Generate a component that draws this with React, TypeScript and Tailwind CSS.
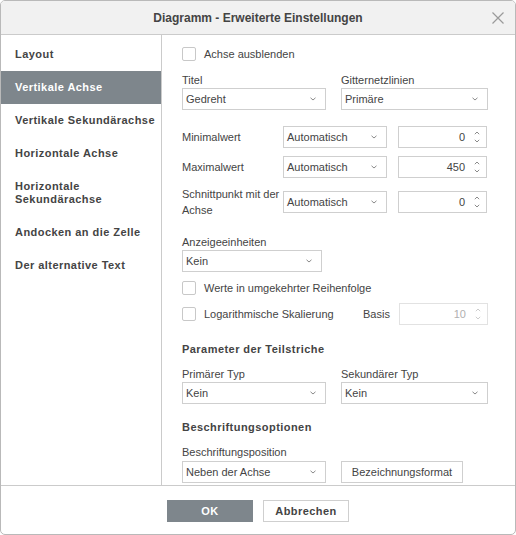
import React from "react";

const font = { fontFamily: '"Liberation Sans", Arial, sans-serif' };

function Chevron() {
  return (
    <svg width="6" height="4" viewBox="0 0 6 4" className="shrink-0">
      <path d="M0.5 0.8 L3 3 L5.5 0.8" fill="none" stroke="#8a8a8a" strokeWidth="1" />
    </svg>
  );
}

function Select({ value, w }: { value: string; w: string }) {
  return (
    <div
      className={`${w} h-[22px] shrink-0 border border-[#cfcfcf] bg-white flex items-center justify-between pl-[3px] pr-[9px] text-[11px] text-[#444]`}
    >
      <span>{value}</span>
      <Chevron />
    </div>
  );
}

function Spin({ value, disabled }: { value: string; disabled?: boolean }) {
  const c = disabled ? "#cccccc" : "#8a8a8a";
  return (
    <div
      className={`w-[89px] h-[22px] shrink-0 border bg-white flex items-center justify-end pr-[6px] text-[11px] ${
        disabled ? "border-[#e2e2e2] text-[#b0b0b0]" : "border-[#cfcfcf] text-[#444]"
      }`}
    >
      <span className="mr-[9px]">{value}</span>
      <svg width="6" height="14" viewBox="0 0 6 14">
        <path d="M0.8 4.2 L3 2 L5.2 4.2" fill="none" stroke={c} strokeWidth="1" />
        <path d="M0.8 9.8 L3 12 L5.2 9.8" fill="none" stroke={c} strokeWidth="1" />
      </svg>
    </div>
  );
}

function Checkbox({ label }: { label: string }) {
  return (
    <div className="flex items-center">
      <div className="w-[14px] h-[14px] border border-[#c8c8c8] rounded-[2px] bg-white shrink-0" />
      <span className="ml-[8px] text-[11px] text-[#444]">{label}</span>
    </div>
  );
}

const navItems = [
  "Layout",
  "Vertikale Achse",
  "Vertikale Sekundärachse",
  "Horizontale Achse",
  "Horizontale Sekundärachse",
  "Andocken an die Zelle",
  "Der alternative Text",
];

export default function App() {
  return (
    <div style={font} className="w-[516px] h-[535px] bg-white">
      <div className="w-[516px] h-[535px] border border-[#b9b9b9] rounded-[5px] overflow-hidden flex flex-col">
        {/* header */}
        <div className="h-[34px] shrink-0 bg-[#f1f1f1] border-b border-[#cbcbcb] relative flex items-center justify-center">
          <span className="text-[12px] font-bold text-[#444]">Diagramm - Erweiterte Einstellungen</span>
          <svg width="12" height="12" viewBox="0 0 12 12" className="absolute right-[11px] top-[11px]">
            <path d="M0.5 0.5 L11.5 11.5 M11.5 0.5 L0.5 11.5" stroke="#9a9a9a" strokeWidth="1.2" />
          </svg>
        </div>

        {/* body */}
        <div className="flex h-[450px] shrink-0">
          <div className="w-[161px] shrink-0 border-r border-[#cbcbcb] pt-[3px]">
            {navItems.map((item) => {
              const active = item === "Vertikale Achse";
              const twoLine = item === "Horizontale Sekundärachse";
              return (
                <div
                  key={item}
                  className={`pl-[14px] pr-[2px] py-[10px] text-[11px] leading-[13px] font-bold tracking-[0.45px] ${
                    active ? "bg-[#7e868c] text-white" : "text-[#444]"
                  }`}
                >
                  {twoLine ? (
                    <>
                      Horizontale
                      <br />
                      Sekundärachse
                    </>
                  ) : (
                    item
                  )}
                </div>
              );
            })}
          </div>

          <div className="flex-1 pl-[20px] pt-[12px] text-[11px] leading-[13px] text-[#444]">
            <Checkbox label="Achse ausblenden" />

            <div className="flex mt-[13px] gap-[15px]">
              <div>
                <div className="mb-[1px]">Titel</div>
                <Select value="Gedreht" w="w-[144px]" />
              </div>
              <div>
                <div className="mb-[1px]">Gitternetzlinien</div>
                <Select value="Primäre" w="w-[147px]" />
              </div>
            </div>

            <div className="mt-[16px] flex flex-col gap-[8px]">
              <div className="flex items-center h-[22px]">
                <div className="w-[101px]">Minimalwert</div>
                <Select value="Automatisch" w="w-[104px]" />
                <div className="ml-[11px]">
                  <Spin value="0" />
                </div>
              </div>
              <div className="flex items-center h-[22px]">
                <div className="w-[101px]">Maximalwert</div>
                <Select value="Automatisch" w="w-[104px]" />
                <div className="ml-[11px]">
                  <Spin value="450" />
                </div>
              </div>
              <div className="flex items-center h-[32px]">
                <div className="w-[101px] leading-[16px]">
                  Schnittpunkt mit der
                  <br />
                  Achse
                </div>
                <Select value="Automatisch" w="w-[104px]" />
                <div className="ml-[11px]">
                  <Spin value="0" />
                </div>
              </div>
            </div>

            <div className="mt-[18px] mb-[1px]">Anzeigeeinheiten</div>
            <Select value="Kein" w="w-[140px]" />

            <div className="mt-[9px]">
              <Checkbox label="Werte in umgekehrter Reihenfolge" />
            </div>

            <div className="mt-[8px] flex items-center h-[22px]">
              <div className="w-[181px]">
                <Checkbox label="Logarithmische Skalierung" />
              </div>
              <div className="w-[36px]">Basis</div>
              <Spin value="10" disabled />
            </div>

            <div className="mt-[18px] font-bold tracking-[0.45px]">Parameter der Teilstriche</div>

            <div className="flex mt-[12px] gap-[15px]">
              <div>
                <div className="mb-[1px]">Primärer Typ</div>
                <Select value="Kein" w="w-[144px]" />
              </div>
              <div>
                <div className="mb-[1px]">Sekundärer Typ</div>
                <Select value="Kein" w="w-[147px]" />
              </div>
            </div>

            <div className="mt-[17px] font-bold tracking-[0.45px]">Beschriftungsoptionen</div>

            <div className="mt-[12px] mb-[2px]">Beschriftungsposition</div>
            <div className="flex gap-[15px]">
              <Select value="Neben der Achse" w="w-[144px]" />
              <div className="w-[122px] h-[22px] border border-[#cfcfcf] bg-white flex items-center justify-center text-[11px] text-[#444]">
                Bezeichnungsformat
              </div>
            </div>
          </div>
        </div>

        {/* footer */}
        <div className="flex-1 border-t border-[#cbcbcb] flex justify-center gap-[10px] pt-[14px]">
          <div className="w-[86px] h-[22px] bg-[#7e868c] text-white text-[11px] font-bold tracking-[0.45px] flex items-center justify-center">
            OK
          </div>
          <div className="w-[86px] h-[22px] border border-[#cfcfcf] bg-white text-[#444] text-[11px] font-bold tracking-[0.45px] flex items-center justify-center">
            Abbrechen
          </div>
        </div>
      </div>
    </div>
  );
}
